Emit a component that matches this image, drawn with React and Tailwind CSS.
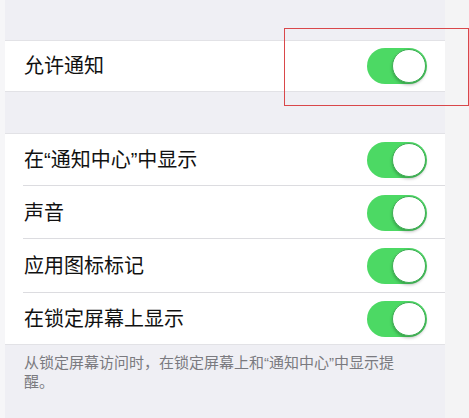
import React from "react";

function Toggle() {
  return (
    <div className="relative w-[60px] h-[36px] rounded-full bg-[#4cd964] shrink-0">
      <div className="absolute right-[1px] top-[1px] w-[34px] h-[34px] rounded-full bg-white border border-[#3fae55] shadow-[0_2px_3px_rgba(0,0,0,0.25)]" />
    </div>
  );
}

function Row({ label, last, h }) {
  return (
    <div className={`flex items-center ${h} pl-[19px] pr-[18px] bg-white relative`}>
      <span className="flex-1 text-[20px] text-[#111]">{label}</span>
      <Toggle />
      {!last && (
        <div className="absolute left-[18px] right-0 bottom-0 h-px bg-[#dcdce0]" />
      )}
    </div>
  );
}

export default function App() {
  return (
    <div
      className="relative w-[469px] h-[418px] flex overflow-hidden"
      style={{ fontFamily: '"Liberation Sans", "Noto Sans CJK SC", sans-serif' }}
    >
      <div className="w-[5px] bg-[#f6f6f8]" />
      <div className="w-[440px] bg-[#efeff4] flex flex-col">
        <div className="h-[40px] shrink-0" />
        <div className="border-y border-[#e2e2e6]">
          <Row label="允许通知" last h="h-[50px]" />
        </div>
        <div className="h-[41px] shrink-0" />
        <div className="border-y border-[#e2e2e6]">
          <Row label="在“通知中心”中显示" h="h-[52px]" />
          <Row label="声音" h="h-[53px]" />
          <Row label="应用图标标记" h="h-[54px]" />
          <Row label="在锁定屏幕上显示" last h="h-[51px]" />
        </div>
        <p className="pl-[19px] pr-[36px] pt-[8px] text-[15px] leading-[19px] text-[#7a7a7f]">
          从锁定屏幕访问时，在锁定屏幕上和“通知中心”中显示提醒。
        </p>
      </div>
      <div className="flex-1 bg-[#f4f4f5]" />
      <div className="absolute left-[284px] top-[28px] w-[185px] h-[78px] border border-[#d9474a]" />
    </div>
  );
}
